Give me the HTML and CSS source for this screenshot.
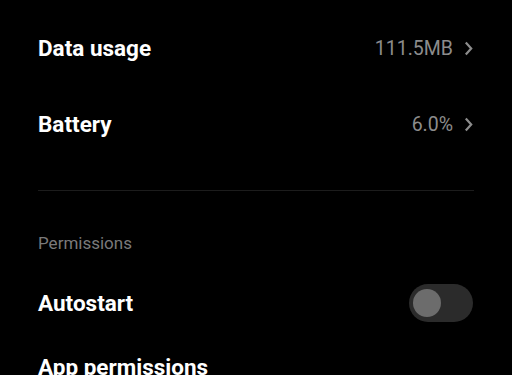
FILE: index.html
```html
<!DOCTYPE html>
<html>
<head>
	<meta charset="utf-8">
	<meta name="viewport" content="width=device-width, initial-scale=1.0">
	<title>App info</title>

	<!-- 样式 -->
	<link rel="stylesheet" href="styles.css">
</head>
<body>
	<div class="settings">

		<!-- 使用情况 -->
		<div class="row">
			<div class="title">Data usage</div>
			<div class="value">111.5MB
				<svg class="arrow" width="9" height="15" viewBox="0 0 9 15"><path d="M1.8 1.5 L7.2 7.5 L1.8 13.5" fill="none" stroke="#8c8c8c" stroke-width="2.2"/></svg>
			</div>
		</div>
		<div class="row">
			<div class="title">Battery</div>
			<div class="value">6.0%
				<svg class="arrow" width="9" height="15" viewBox="0 0 9 15"><path d="M1.8 1.5 L7.2 7.5 L1.8 13.5" fill="none" stroke="#8c8c8c" stroke-width="2.2"/></svg>
			</div>
		</div>

		<div class="line"></div>

		<!-- 权限 -->
		<div class="section">Permissions</div>
		<div class="row">
			<div class="title">Autostart</div>
			<div class="switch"><span></span></div>
		</div>
		<div class="row last">
			<div class="title">App permissions</div>
		</div>
	</div>
</body>
</html>
```

FILE: styles.css
```css
* {
	margin: 0;
	padding: 0;
}

html, body {
	background-color: #000;
	overflow: hidden;
}

body {
	height: 375px;
	font-family: Roboto, "Liberation Sans", sans-serif;
}

.settings {
	padding: 10px 38px 0;
}

.row {
	height: 76px;
	display: flex;
	justify-content: space-between;
	align-items: center;
}

.title {
	font-size: 22.5px;
	font-weight: bold;
	color: #fff;
	line-height: 26px;
}

.value {
	display: flex;
	align-items: center;
	font-size: 19.5px;
	color: #8c8c8c;
}

.arrow {
	margin-left: 11px;
	margin-right: 1px;
}

/* 分割线 */
.line {
	height: 1px;
	margin-top: 28px;
	background-color: #1c1c1c;
}

.section {
	padding: 42px 0 12px;
	font-size: 17px;
	line-height: 20px;
	color: #7a7a7a;
}

/* 开关 */
.switch {
	width: 64px;
	height: 38px;
	border-radius: 19px;
	background-color: #2b2b2b;
	position: relative;
	margin-right: 1px;
}

.switch > span {
	width: 28px;
	height: 28px;
	border-radius: 50%;
	background-color: #6c6c6c;
	position: absolute;
	left: 4px;
	top: 5px;
}

.row.last {
	height: auto;
	display: block;
	padding-top: 13px;
}
```
